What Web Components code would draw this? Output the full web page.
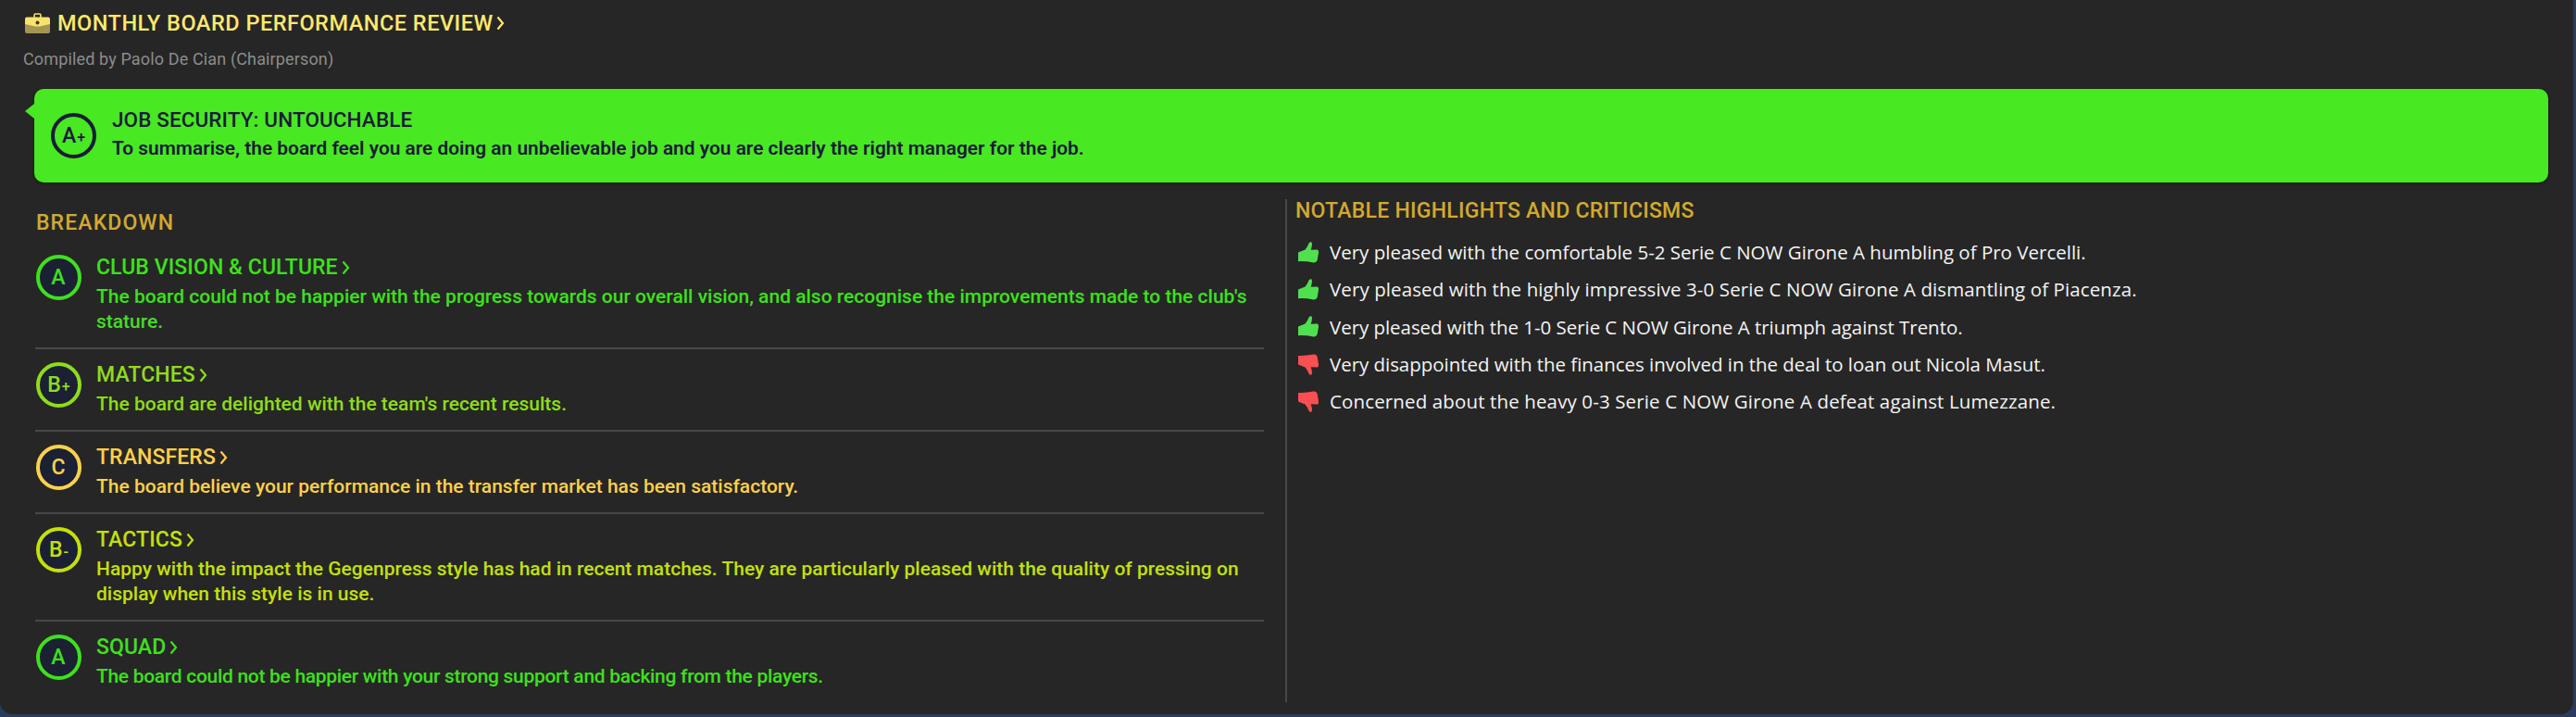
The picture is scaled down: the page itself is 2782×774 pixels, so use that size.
<!DOCTYPE html>
<html>
<head>
<meta charset="utf-8">
<style>
  html,body{margin:0;background:#2b3b5e}
  body{font-family:Roboto,"Liberation Sans",sans-serif}
</style>
</head>
<body>
<board-review>
  <review-header slot="header" sub="Compiled by Paolo De Cian (Chairperson)">MONTHLY BOARD PERFORMANCE REVIEW</review-header>
  <job-banner slot="banner" grade="A" mark="+" title="JOB SECURITY: UNTOUCHABLE">To summarise, the board feel you are doing an unbelievable job and you are clearly the right manager for the job.</job-banner>

  <breakdown-row slot="left" grade="A" color="#3fe01e" heading="CLUB VISION &amp; CULTURE">The board could not be happier with the progress towards our overall vision, and also recognise the improvements made to the club's stature.</breakdown-row>
  <breakdown-row slot="left" grade="B" mark="+" color="#8edc1c" heading="MATCHES">The board are delighted with the team's recent results.</breakdown-row>
  <breakdown-row slot="left" grade="C" color="#ffd04c" heading="TRANSFERS">The board believe your performance in the transfer market has been satisfactory.</breakdown-row>
  <breakdown-row slot="left" grade="B" mark="-" color="#c4e00c" heading="TACTICS">Happy with the impact the Gegenpress style has had in recent matches. They are particularly pleased with the quality of pressing on display when this style is in use.</breakdown-row>
  <breakdown-row slot="left" grade="A" color="#3fe01e" heading="SQUAD" style="--track:-.3px" last>The board could not be happier with your strong support and backing from the players.</breakdown-row>

  <highlight-row slot="right" kind="up">Very pleased with the comfortable 5-2 Serie C NOW Girone A humbling of Pro Vercelli.</highlight-row>
  <highlight-row slot="right" kind="up" style="--track:.1px">Very pleased with the highly impressive 3-0 Serie C NOW Girone A dismantling of Piacenza.</highlight-row>
  <highlight-row slot="right" kind="up" style="--track:-.05px">Very pleased with the 1-0 Serie C NOW Girone A triumph against Trento.</highlight-row>
  <highlight-row slot="right" kind="down" style="--track:-.04px">Very disappointed with the finances involved in the deal to loan out Nicola Masut.</highlight-row>
  <highlight-row slot="right" kind="down" style="--track:.13px">Concerned about the heavy 0-3 Serie C NOW Girone A defeat against Lumezzane.</highlight-row>
</board-review>

<script>
const esc = s => (s ?? '').replace(/&/g,'&amp;').replace(/</g,'&lt;');
const chevron = c => `<svg width="9" height="16" viewBox="0 0 9 16" style="flex:none"><path d="M1.5 1.500 7 8l-5.500 6.500" fill="none" stroke="${c}" stroke-width="2.200"/></svg>`;

customElements.define('board-review', class extends HTMLElement{
  constructor(){
    super();
    this.attachShadow({mode:'open'}).innerHTML = `
      <style>
        :host{display:block;width:2779px;height:771px;background:#262626;border-radius:0 0 14px 14px;overflow:hidden;font-family:Roboto,"Liberation Sans",sans-serif}
        .main{display:grid;grid-template-columns:1327px 1fr;column-gap:23px;margin:18px 27px 0 38px;height:543px}
        .left{padding-top:14px}
        .right{border-left:2px solid #484848;padding-left:9px}
        h2{margin:0;font-weight:500;font-size:23px;line-height:24px;color:#d2a92f}
        .left h2{margin:0 0 8px 1px;letter-spacing:1.100px}
        .right h2{margin:1px 0 12px;letter-spacing:.25px}
      </style>
      <slot name="header"></slot>
      <slot name="banner"></slot>
      <div class="main">
        <div class="left"><h2>BREAKDOWN</h2><slot name="left"></slot></div>
        <div class="right"><h2>NOTABLE HIGHLIGHTS AND CRITICISMS</h2><slot name="right"></slot></div>
      </div>`;
  }
});

customElements.define('review-header', class extends HTMLElement{
  constructor(){
    super();
    this.attachShadow({mode:'open'}).innerHTML = `
      <style>
        :host{display:block;padding:12px 0 0 27px}
        .t{display:flex;align-items:center;height:26px;color:#ffe96e;font-size:23.500px;font-weight:500;letter-spacing:.5px}
        svg.bc{margin-right:8px;flex:none}
        .c{margin-left:3px;display:flex}
        .s{margin:15px 0 0 -2px;font-size:18px;line-height:22px;color:#8c8c8c;letter-spacing:.14px}
      </style>
      <div class="t">
        <svg class="bc" width="27" height="22" viewBox="0 0 27 22">
          <path d="M10 5V2.500Q10 1 11.500 1h4Q17 1 17 2.500V5" fill="none" stroke="#f8e36d" stroke-width="1.600"/>
          <path d="M0 11h27v9q0 2-2 2H2q-2 0-2-2z" fill="#a39653"/>
          <path d="M2 4.500h23q2 0 2 2V12l-11 2.500h-5L0 12V6.500q0-2 2-2z" fill="#f9e36e"/>
          <circle cx="13.500" cy="10.500" r="2" fill="#3b3618"/>
        </svg>
        <slot></slot><span class="c">${chevron('#ffe96e')}</span>
      </div>
      <div class="s">${esc(this.getAttribute('sub'))}</div>`;
  }
});

customElements.define('grade-badge', class extends HTMLElement{
  constructor(){
    super();
    const c = this.getAttribute('color') || '#1b1b38';
    this.attachShadow({mode:'open'}).innerHTML = `
      <style>
        :host{display:flex;flex:none;box-sizing:border-box;width:49px;height:49px;border-radius:50%;align-items:center;justify-content:center;
          border:4.500px solid ${c};color:${c};background:${this.getAttribute('fill') || 'transparent'};font-size:23px;font-weight:500;line-height:1}
        small{font-size:16px;margin-left:1px}
      </style>
      <span>${esc(this.getAttribute('grade'))}<small>${esc(this.getAttribute('mark'))}</small></span>`;
  }
});

customElements.define('job-banner', class extends HTMLElement{
  constructor(){
    super();
    const g = esc(this.getAttribute('grade')), m = esc(this.getAttribute('mark'));
    this.attachShadow({mode:'open'}).innerHTML = `
      <style>
        :host{display:flex;position:relative;box-sizing:border-box;height:101px;margin:21px 27px 0 37px;padding:26px 18px 0;gap:17px;
          background:#48e822;border-radius:10px;box-shadow:0 1px 3px rgba(0,0,0,.5);color:#1b1b38}
        .tail{position:absolute;left:-10px;top:16px;width:0;height:0;border:8px solid transparent;border-left:0;border-right:10px solid #48e822}
        b{display:block;font-weight:500;font-size:22.500px;line-height:24px;letter-spacing:.1px;margin-top:-5px}
        p{margin:6px 0 0;font-weight:600;font-size:20.900px;line-height:27px}
      </style>
      <span class="tail"></span>
      <grade-badge grade="${g}" mark="${m}"></grade-badge>
      <div><b>${esc(this.getAttribute('title'))}</b><p><slot></slot></p></div>`;
  }
});

customElements.define('breakdown-row', class extends HTMLElement{
  constructor(){
    super();
    const c = this.getAttribute('color');
    this.attachShadow({mode:'open'}).innerHTML = `
      <style>
        :host{display:flex;gap:16px;padding:14px 0 14px 1px;color:${c};border-bottom:2px solid #484848}
        :host([last]){border-bottom:0}
        .h{display:flex;align-items:center;gap:4px;height:27px;font-size:23px;font-weight:500;letter-spacing:.1px}
        p{margin:5px 0 0;font-size:21px;font-weight:500;line-height:27px;letter-spacing:var(--track,0)}
      </style>
      <grade-badge grade="${esc(this.getAttribute('grade'))}" mark="${esc(this.getAttribute('mark'))}" color="${c}" fill="#1b2033"></grade-badge>
      <div><div class="h">${esc(this.getAttribute('heading'))}${chevron(c)}</div><p><slot></slot></p></div>`;
  }
});

customElements.define('highlight-row', class extends HTMLElement{
  constructor(){
    super();
    const up = this.getAttribute('kind') === 'up';
    this.attachShadow({mode:'open'}).innerHTML = `
      <style>
        :host{display:flex;align-items:center;height:40.300px;padding-left:3px;color:#f4f4f4;font-family:"Open Sans","Noto Sans",sans-serif;font-size:20.500px;letter-spacing:var(--track,0)}
        svg{flex:none;margin-right:12px;${up ? '' : 'transform:scaleY(-1);'}}
      </style>
      <svg width="22" height="23" viewBox="0 0 64 66">
        <path d="M0 33 22 24Q30 14 34 3 38-1 42 1 46 6 40 25L60 24Q65 26 64 34L60 58Q57 66 48 65 25 60 0 61Z" fill="${up ? '#4fe04f' : '#fb4f51'}"/>
      </svg>
      <slot></slot>`;
  }
});
</script>
</body>
</html>
